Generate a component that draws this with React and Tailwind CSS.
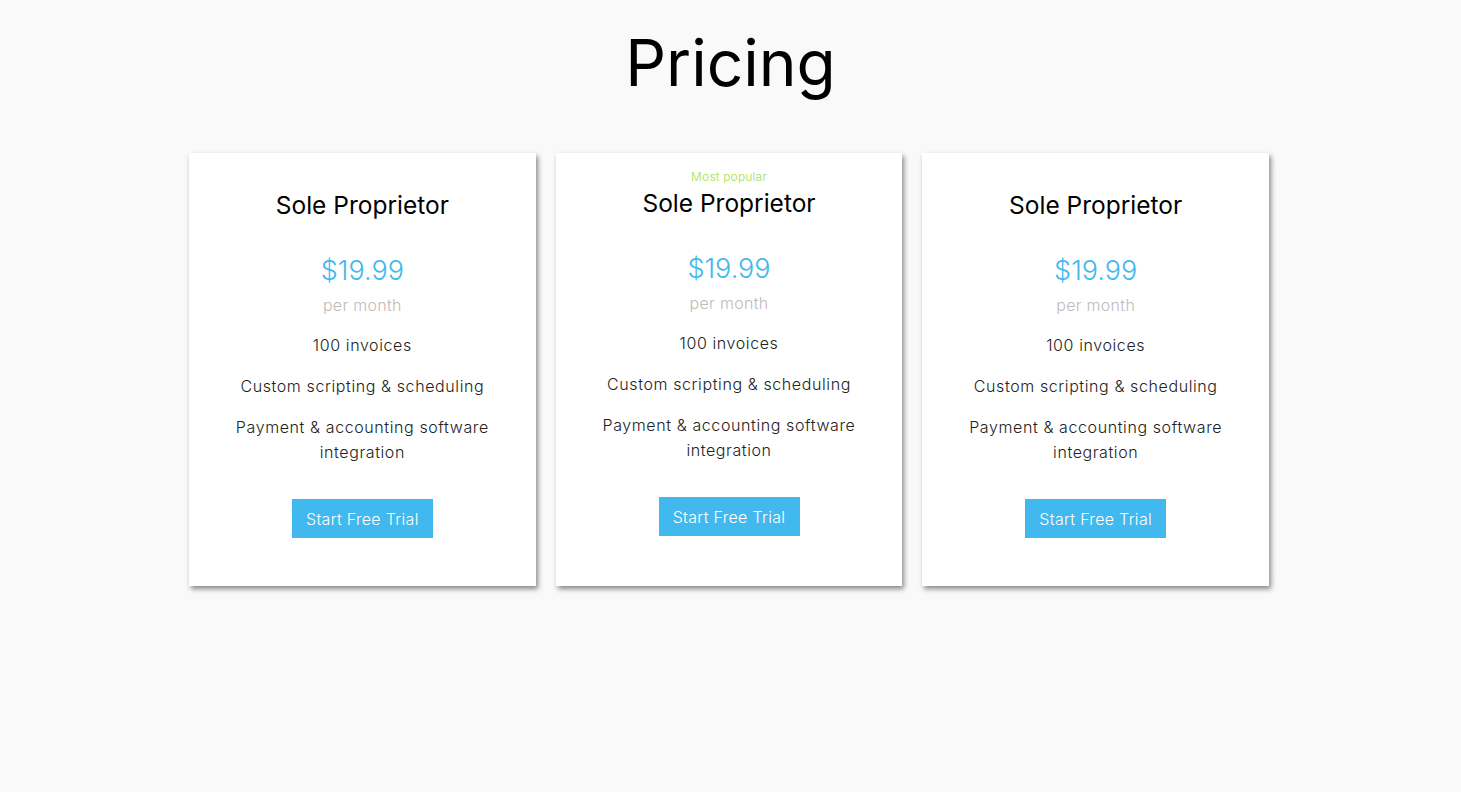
import React from "react";

function Card({ popular }) {
  return (
    <div
      className={`flex flex-1 flex-col items-center bg-white pb-[48px] text-center shadow-[2px_3px_5px_rgba(0,0,0,0.45)] ${
        popular ? "pt-[16px]" : "pt-[34px]"
      }`}
    >
      {popular && (
        <div className="h-[16px] text-[12px] leading-[16px] font-light tracking-[0.2px] text-[#a3e04f]">
          Most popular
        </div>
      )}
      <h3 className="h-[36px] text-[24.5px] leading-[36px] font-normal text-black">
        Sole Proprietor
      </h3>
      <div className="mt-[30px] h-[36px] text-[27px] leading-[36px] font-light text-[#42b8ee]">
        $19.99
      </div>
      <div className="mt-[4px] h-[24px] text-[16px] leading-[24px] font-light tracking-[0.3px] text-[#c2baba]">
        per month
      </div>
      <div className="mt-4 text-[16px] leading-[25px] font-light tracking-[0.6px] text-[#222]">
        100 invoices
      </div>
      <div className="mt-4 text-[16px] leading-[25px] font-light tracking-[0.6px] text-[#222]">
        Custom scripting &amp; scheduling
      </div>
      <div className="mt-4 w-[280px] text-[16px] leading-[25px] font-light tracking-[0.6px] text-[#222]">
        Payment &amp; accounting software integration
      </div>
      <button className="mt-[34px] h-[39px] w-[141px] bg-[#41b8ee] text-[16px] font-light tracking-[0.3px] text-white">
        Start Free Trial
      </button>
    </div>
  );
}

export default function App() {
  return (
    <div
      className="min-h-[792px] bg-[#f9f9f9]"
      style={{ fontFamily: "Inter, 'Noto Sans', sans-serif" }}
    >
      <h1 className="pt-[15px] text-center text-[64px] leading-[96px] font-normal text-black">
        Pricing
      </h1>
      <div className="mx-auto mt-[42px] w-[1083px] pr-[3px]">
        <div className="flex items-stretch gap-[20px]">
          <Card />
          <Card popular />
          <Card />
        </div>
      </div>
    </div>
  );
}
